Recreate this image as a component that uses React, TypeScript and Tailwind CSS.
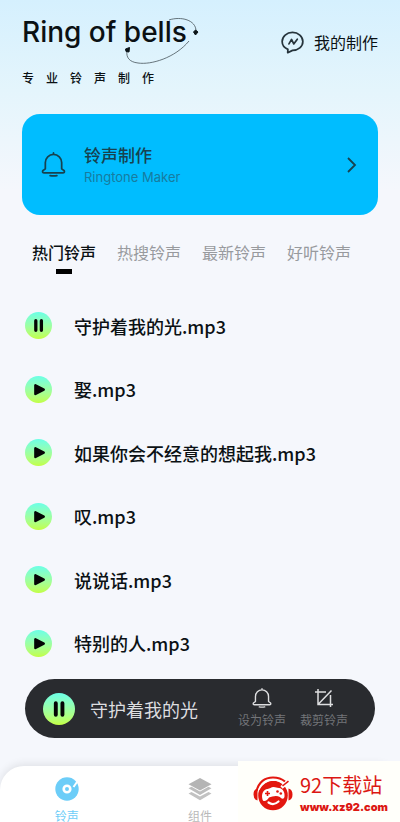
import React from "react";

const songs = ["守护着我的光.mp3", "娶.mp3", "如果你会不经意的想起我.mp3", "叹.mp3", "说说话.mp3", "特别的人.mp3"];
const tabs = ["热门铃声", "热搜铃声", "最新铃声", "好听铃声"];

function BellIcon({ className }: { className: string }) {
  return (
    <svg viewBox="0 0 26 26" fill="none" stroke="currentColor" strokeWidth="1.800" strokeLinejoin="round" strokeLinecap="round" className={className} aria-hidden="true">
      <path d="M13 1v1.500M4.500 17.500V11a8.500 8.500 0 0 1 17 0v6.500l2.700 2q.8 2.200-1.500 2.200H3.300Q1 21.700 1.800 19.500z" />
      <path d="M9.500 24.500q3.500.8 7 0" />
    </svg>
  );
}

function ChatIcon() {
  return (
    <svg viewBox="0 0 24 24" fill="none" stroke="#26343c" strokeWidth="1.800" strokeLinejoin="round" strokeLinecap="round" className="size-[23px]" aria-hidden="true">
      <path d="M7.200 19.200C3.500 17.600 1.200 14.500 1.200 11c0-5.400 4.800-9.500 10.800-9.500S22.800 5.600 22.800 11 18 20.200 12 20.200L7 22.600z" />
      <path d="m8.300 13.500 2.700-4.700 2.300 4.700L17 8.600" />
    </svg>
  );
}

function CropIcon() {
  return (
    <svg viewBox="0 0 20 20" fill="none" stroke="currentColor" strokeWidth="1.500" className="size-5" aria-hidden="true">
      <path d="M4 1v15.500h15M1 4h11M16.500 7v12M4 16.500 17.500 2.500" />
    </svg>
  );
}

function DiscIcon() {
  return (
    <svg viewBox="0 0 24 24" className="size-6" aria-hidden="true">
      <circle cx="12" cy="12" r="11.700" fill="#6ccdf8" />
      <circle cx="12" cy="12" r="3.300" fill="none" stroke="#fff" strokeWidth="2.600" />
      <path d="M18.500 10 23 3.500" stroke="#fff" strokeWidth="2" />
    </svg>
  );
}

function LayersIcon() {
  return (
    <svg viewBox="0 0 24 24" className="size-6" aria-hidden="true">
      <path d="M12 1 23.500 7.200 12 13.500.5 7.200z" fill="#b4b4b4" />
      <path d="m.5 11.300 3-1.500L12 14.500l8.500-4.700 3 1.500L12 18z" fill="#bdbdbd" />
      <path d="m.5 16.500 3-1.500L12 19.600l8.500-4.600 3 1.500L12 23.300z" fill="#c2c2c2" />
    </svg>
  );
}

function PlayBadge({ playing, label, large = false }: { playing: boolean; label: string; large?: boolean }) {
  return (
    <button
      type="button"
      aria-label={label}
      className={`${large ? "size-8" : "size-[27px]"} shrink-0 rounded-full bg-linear-to-b from-[#6bffe6] to-[#c2ff41]`}
    >
      <svg viewBox="0 0 28 28" className="size-full" aria-hidden="true">
        {playing ? (
          <path d="M11.200 9v10M17 9v10" stroke="#050505" strokeWidth="3.400" strokeLinecap="round" />
        ) : (
          <path d="M10.800 9.600v9l8.600-4.500z" fill="#050505" stroke="#050505" strokeWidth="2.600" strokeLinejoin="round" />
        )}
      </svg>
    </button>
  );
}

function Swirl() {
  return (
    <svg viewBox="0 0 76 50" fill="none" className="absolute top-0 -right-3 h-[50px] w-[76px]" aria-hidden="true">
      <path d="M46 4C58 0 73 4 73 15M66 25C52 42 28 49 15 47 6 46 3 41 4 35" stroke="#47545b" strokeWidth="0.800" />
      <path d="m70.500 16 2-2 2.500 2-2.500 3zM2.500 33l4-1.500-.5 4.500-3-.5z" fill="#0b1418" stroke="#0b1418" />
    </svg>
  );
}

function SiteLogo() {
  return (
    <svg viewBox="0 0 40 36" className="h-9 w-10 shrink-0" aria-hidden="true">
      <circle cx="20" cy="19.500" r="14.800" fill="#e3170f" />
      <path d="M3.500 15C6 6 12 1.500 20 1.500c5 0 9 1.500 12 4" fill="none" stroke="#e3170f" strokeWidth="2.200" />
      <path d="M5.500 14C9 7 15 4 21 4c4 .2 7 1.500 9 3.500" fill="none" stroke="#fff" strokeWidth="1.300" />
      <path d="M28.500 11.500 36 5" stroke="#fff" strokeWidth="3.500" />
      <path d="m29.500 10 6-4.800" stroke="#e3170f" strokeWidth="1.600" />
      <path d="M4.500 12.500v12Q.5 23.500.5 18.500t4-6zM35.500 12.500v12q4-1 4-6t-4-6z" fill="#e3170f" />
      <path d="M9.500 23.500C8 17.500 10.500 13.500 14.500 13c2.500-.3 3.500-2 6-2s3 .8 5.500 1c4 .5 6 4.500 5.500 8.500-.4 3-3 2.500-4.500.5-4-2-7.500-.5-11 .5-1.500 3-5.500 5-6.500 2z" fill="#fff" />
      <path d="M14.500 15v5M12 17.500h5" stroke="#e3170f" strokeWidth="1.600" />
      <circle cx="24.500" cy="15.500" r="1.300" fill="#e3170f" />
      <circle cx="27.800" cy="17.500" r="1.300" fill="#e3170f" />
      <path d="M15.500 26.500q5 3.500 10-1" fill="none" stroke="#fff" strokeWidth="2.200" strokeLinecap="round" />
    </svg>
  );
}

export default function App() {
  return (
    <div className="relative flex min-h-screen flex-col overflow-hidden bg-[#f5f7fc] bg-[linear-gradient(#d5f0fe_0px,#e4f5fc_90px,#f5f7fc_190px)] font-['Noto_Sans_CJK_SC',sans-serif] text-[#0b1114]">
      <header className="flex items-start justify-between px-[22px] pt-4">
        <div>
          <div className="relative h-[50px]">
            <h1 className="font-['Inter','Liberation_Sans',sans-serif] text-[28px] leading-8 font-medium">Ring of bells</h1>
            <Swirl />
          </div>
          <p className="text-xs leading-6 font-medium tracking-[12px]">专业铃声制作</p>
        </div>
        <button type="button" className="mt-3 flex items-center gap-2.5 text-base leading-7">
          <ChatIcon />
          我的制作
        </button>
      </header>

      <button type="button" className="mx-[22px] mt-6 flex h-[101px] items-center rounded-[18px] bg-[#00bdff] pr-5 pl-[19px] text-left text-[#17424f]">
        <BellIcon className="size-[25px]" />
        <span className="ml-[18px] flex-1">
          <span className="block text-[17px] leading-6 font-medium">铃声制作</span>
          <span className="block font-['Inter','Liberation_Sans',sans-serif] text-[13px] leading-5 text-[#177c9f]">Ringtone Maker</span>
        </span>
        <svg viewBox="0 0 12 18" fill="none" stroke="currentColor" strokeWidth="1.800" className="h-[18px] w-3" aria-hidden="true">
          <path d="m2 2 7 7-7 7" />
        </svg>
      </button>

      <nav className="mt-[25px] flex gap-[21px] pl-8 text-base leading-6" aria-label="铃声分类">
        {tabs.map((tab, i) => (
          <button key={tab} type="button" className={`flex shrink-0 flex-col items-center gap-[5px] ${i === 0 ? "font-medium" : "text-[#989a9e]"}`}>
            {tab}
            {i === 0 && <span className="h-[5px] w-4 bg-black" />}
          </button>
        ))}
      </nav>

      <ul className="mt-5 grid flex-1 auto-rows-fr">
        {songs.map((song, i) => (
          <li key={song} className="flex min-h-12 items-center gap-[22px] pl-[25px] text-lg leading-7 font-medium">
            <PlayBadge playing={i === 0} label={song} />
            <span>{song}</span>
          </li>
        ))}
      </ul>

      <section className="mx-[25px] mt-1 flex h-[59px] items-center rounded-full bg-[#292b2f] pr-[27px] pl-[18px] text-[#dddee0]">
        <PlayBadge playing large label="暂停" />
        <span className="ml-[15px] flex-1 text-lg leading-7">守护着我的光</span>
        <div className="flex gap-[14px] text-xs leading-5 text-[#737579]">
          <button type="button" className="flex flex-col items-center gap-0.5">
            <span className="text-[#dddee0]"><BellIcon className="size-5" /></span>
            设为铃声
          </button>
          <button type="button" className="flex flex-col items-center gap-0.5">
            <span className="text-[#dddee0]"><CropIcon /></span>
            裁剪铃声
          </button>
        </div>
      </section>

      <nav className="mt-7 grid h-14 grid-cols-3 rounded-t-[24px] bg-white text-xs leading-3 shadow-[0_-2px_8px_rgba(0,0,0,0.09)]" aria-label="主导航">
        <a href="#ringtones" className="flex flex-col items-center gap-[9px] pt-[11px] text-[#6ccdf8]">
          <DiscIcon />
          铃声
        </a>
        <a href="#widgets" className="flex flex-col items-center gap-[9px] pt-[11px] text-[#b9b9b9]">
          <LayersIcon />
          组件
        </a>
      </nav>

      <aside className="absolute right-0 bottom-0 flex h-[61px] w-[162px] items-start gap-[7px] bg-[#fffffa] pt-3 pl-[15px]">
        <div className="pt-[3px]"><SiteLogo /></div>
        <div className="whitespace-nowrap text-[#dc1712]">
          <div className="text-xl leading-6">92下载站</div>
          <div className="font-['Inter','Liberation_Sans',sans-serif] text-[11px] leading-5 font-black">www.xz92.com</div>
        </div>
      </aside>
    </div>
  );
}
